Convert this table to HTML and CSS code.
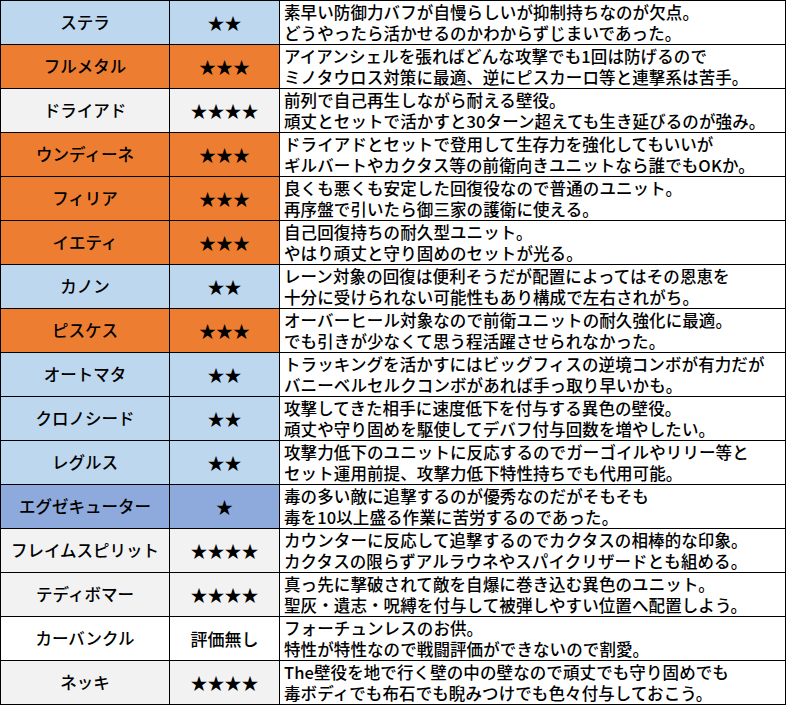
FILE: index.html
```html
<!DOCTYPE html>
<html lang="ja">
<head>
<meta charset="utf-8">
<title>評価表</title>
<link rel="stylesheet" href="styles.css">
</head>
<body>
<table class="tbl">
<colgroup><col class="c-name"><col class="c-rank"><col class="c-desc"></colgroup>
<tbody>
<tr class="blue"><td class="name">ステラ</td><td class="rank">★★</td><td class="desc">素早い防御力バフが自慢らしいが抑制持ちなのが欠点。<br>どうやったら活かせるのかわからずじまいであった。</td></tr>
<tr class="orange"><td class="name">フルメタル</td><td class="rank">★★★</td><td class="desc">アイアンシェルを張ればどんな攻撃でも1回は防げるので<br>ミノタウロス対策に最適、逆にピスカーロ等と連撃系は苦手。</td></tr>
<tr class="gray"><td class="name">ドライアド</td><td class="rank">★★★★</td><td class="desc">前列で自己再生しながら耐える壁役。<br>頑丈とセットで活かすと30ターン超えても生き延びるのが強み。</td></tr>
<tr class="orange"><td class="name">ウンディーネ</td><td class="rank">★★★</td><td class="desc">ドライアドとセットで登用して生存力を強化してもいいが<br>ギルバートやカクタス等の前衛向きユニットなら誰でもOKか。</td></tr>
<tr class="orange"><td class="name">フィリア</td><td class="rank">★★★</td><td class="desc">良くも悪くも安定した回復役なので普通のユニット。<br>再序盤で引いたら御三家の護衛に使える。</td></tr>
<tr class="orange"><td class="name">イエティ</td><td class="rank">★★★</td><td class="desc">自己回復持ちの耐久型ユニット。<br>やはり頑丈と守り固めのセットが光る。</td></tr>
<tr class="blue"><td class="name">カノン</td><td class="rank">★★</td><td class="desc">レーン対象の回復は便利そうだが配置によってはその恩恵を<br>十分に受けられない可能性もあり構成で左右されがち。</td></tr>
<tr class="orange"><td class="name">ピスケス</td><td class="rank">★★★</td><td class="desc">オーバーヒール対象なので前衛ユニットの耐久強化に最適。<br>でも引きが少なくて思う程活躍させられなかった。</td></tr>
<tr class="blue"><td class="name">オートマタ</td><td class="rank">★★</td><td class="desc">トラッキングを活かすにはビッグフィスの逆境コンボが有力だが<br>バニーベルセルクコンボがあれば手っ取り早いかも。</td></tr>
<tr class="blue"><td class="name">クロノシード</td><td class="rank">★★</td><td class="desc">攻撃してきた相手に速度低下を付与する異色の壁役。<br>頑丈や守り固めを駆使してデバフ付与回数を増やしたい。</td></tr>
<tr class="blue"><td class="name">レグルス</td><td class="rank">★★</td><td class="desc">攻撃力低下のユニットに反応するのでガーゴイルやリリー等と<br>セット運用前提、攻撃力低下特性持ちでも代用可能。</td></tr>
<tr class="indigo"><td class="name">エグゼキューター</td><td class="rank">★</td><td class="desc">毒の多い敵に追撃するのが優秀なのだがそもそも<br>毒を10以上盛る作業に苦労するのであった。</td></tr>
<tr class="gray"><td class="name">フレイムスピリット</td><td class="rank">★★★★</td><td class="desc">カウンターに反応して追撃するのでカクタスの相棒的な印象。<br>カクタスの限らずアルラウネやスパイクリザードとも組める。</td></tr>
<tr class="gray"><td class="name">テディボマー</td><td class="rank">★★★★</td><td class="desc">真っ先に撃破されて敵を自爆に巻き込む異色のユニット。<br>聖灰・遺志・呪縛を付与して被弾しやすい位置へ配置しよう。</td></tr>
<tr class="white"><td class="name">カーバンクル</td><td class="rank">評価無し</td><td class="desc">フォーチュンレスのお供。<br>特性が特性なので戦闘評価ができないので割愛。</td></tr>
<tr class="gray"><td class="name">ネッキ</td><td class="rank">★★★★</td><td class="desc">The壁役を地で行く壁の中の壁なので頑丈でも守り固めでも<br>毒ボディでも布石でも睨みつけでも色々付与しておこう。</td></tr>
</tbody>
</table>
</body>
</html>
```

FILE: styles.css
```css
html, body {
  margin: 0;
  padding: 0;
  background: #ffffff;
}
body {
  font-family: "Noto Sans CJK JP", "Noto Sans", sans-serif;
  font-size: 16.5px;
  font-weight: 500;
  color: #000;
}
.tbl {
  border-collapse: separate;
  border-spacing: 0;
  table-layout: fixed;
  width: 786px;
  border-top: 1px solid #000;
  border-left: 1px solid #000;
}
.c-name { width: 169px; }
.c-rank { width: 110px; }
.c-desc { width: 506px; }
.tbl td {
  box-sizing: border-box;
  height: 44px;
  padding: 0;
  border-right: 1px solid #000;
  border-bottom: 1px solid #000;
  vertical-align: middle;
  line-height: 21px;
  white-space: nowrap;
  overflow: hidden;
}
.name, .rank {
  text-align: center;
}
.name { padding-top: 1px; }
.rank { font-size: 17px; }
.tbl td.desc {
  text-align: left;
  background: #ffffff;
  padding-left: 4px;
  letter-spacing: 0.1px;
}
.blue td.name, .blue td.rank { background: #bdd7ee; }
.orange td.name, .orange td.rank { background: #ed7d31; }
.gray td.name, .gray td.rank { background: #f2f2f2; }
.indigo td.name, .indigo td.rank { background: #8ea9db; }
.white td.name, .white td.rank { background: #ffffff; }
```
